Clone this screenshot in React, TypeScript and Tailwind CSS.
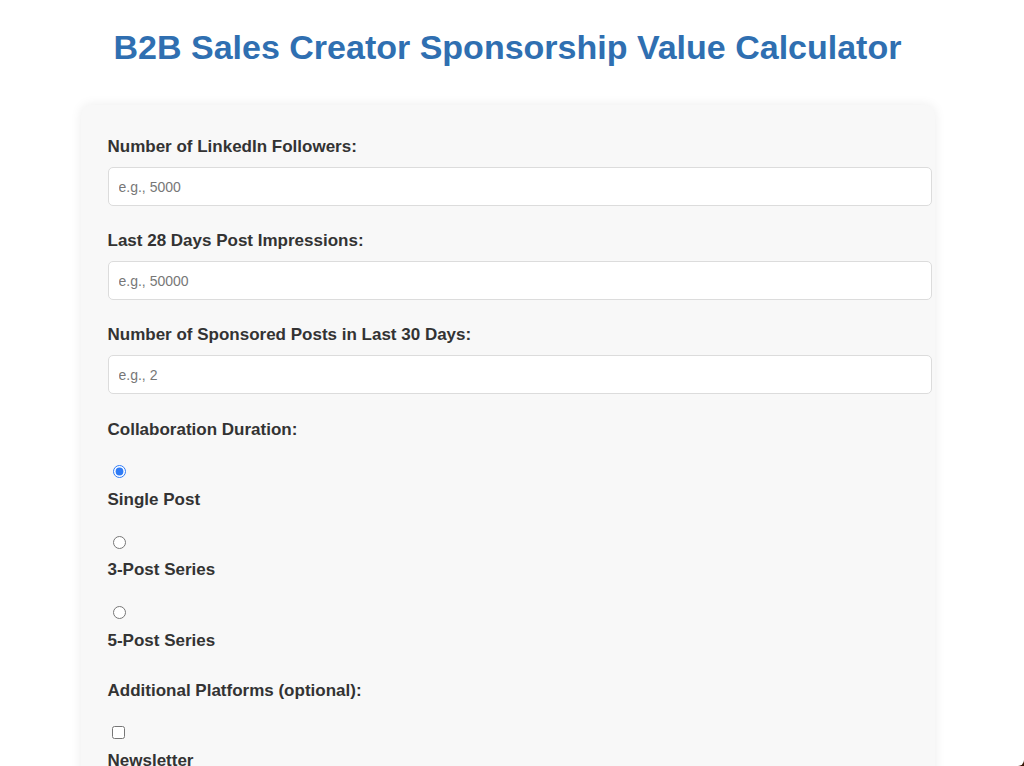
import React, { useState } from 'react';

const fields = [
    { label: 'Number of LinkedIn Followers:', placeholder: 'e.g., 5000' },
    { label: 'Last 28 Days Post Impressions:', placeholder: 'e.g., 50000' },
    { label: 'Number of Sponsored Posts in Last 30 Days:', placeholder: 'e.g., 2' },
];

const durations = ['Single Post', '3-Post Series', '5-Post Series'];

const App: React.FC = () => {
    const [duration, setDuration] = useState('Single Post');
    const [newsletter, setNewsletter] = useState(false);

    return (
        <div
            className="relative min-h-[766px] w-[1015px] bg-white text-[#333]"
            style={{ fontFamily: '"Liberation Sans", Arial, sans-serif' }}
        >
            <h1 className="pt-[27.5px] text-center text-[34px] font-bold leading-[39px] text-[#2f6fb1]">
                B2B Sales Creator Sponsorship Value Calculator
            </h1>

            <div className="mx-auto mt-[38.5px] w-[854px] rounded-[10px] bg-[#f8f8f8] pl-[27px] pr-[25px] pt-[32px] pb-[40px] shadow-[0_0_12px_rgba(0,0,0,0.08)]">
                {fields.map((f, i) => (
                    <div key={f.label} className={i === 2 ? 'mb-[26px]' : 'mb-[25px]'}>
                        <label className="mb-[10px] block text-[17px] font-bold leading-[20px]">
                            {f.label}
                        </label>
                        <input
                            type="number"
                            placeholder={f.placeholder}
                            className="box-border block h-[39px] w-[824px] rounded-[5px] border border-[#dcdcdc] bg-white px-[10px] text-[14px] placeholder:text-[#777] focus:outline-none"
                        />
                    </div>
                ))}

                <label className="block text-[17px] font-bold leading-[20px]">
                    Collaboration Duration:
                </label>
                {durations.map((d, i) => (
                    <div key={d} className={i === 0 ? 'pt-[25px]' : 'pt-[26px]'}>
                        <input
                            type="radio"
                            name="duration"
                            checked={duration === d}
                            onChange={() => setDuration(d)}
                            className="ml-[5px] block h-[13px] w-[13px] accent-[#2f7bf5]"
                        />
                        <label className="mt-[11.5px] block text-[17px] font-bold leading-[20px]">
                            {d}
                        </label>
                    </div>
                ))}

                <label className="mt-[30.5px] block text-[17px] font-bold leading-[20px]">
                    Additional Platforms (optional):
                </label>
                <div className="pt-[24.5px]">
                    <input
                        type="checkbox"
                        checked={newsletter}
                        onChange={() => setNewsletter(!newsletter)}
                        className="ml-[4px] block h-[13px] w-[13px] accent-[#2f7bf5]"
                    />
                    <label className="mt-[12.5px] block text-[17px] font-bold leading-[20px]">
                        Newsletter
                    </label>
                </div>
            </div>

            {/* window corner */}
            <div className="fixed bottom-0 right-0 h-[6px] w-[6px] bg-[#3a1808]">
                <div className="h-full w-full rounded-br-[6px] bg-white" />
            </div>
        </div>
    );
};

export default App;
